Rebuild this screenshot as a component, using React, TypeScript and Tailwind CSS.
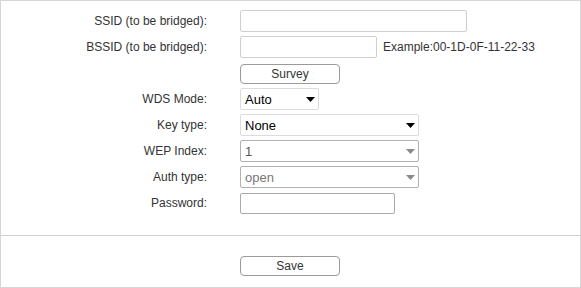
import React from "react";

const font = { fontFamily: '"Liberation Sans", Arial, sans-serif' };

function Arrow({ color }: { color: string }) {
  return (
    <svg width="9" height="5" viewBox="0 0 9 5" className="shrink-0">
      <path d="M0 0 L9 0 L4.5 5 Z" fill={color} />
    </svg>
  );
}

function Select({
  value,
  width,
  disabled,
  textColor,
}: {
  value: string;
  width: string;
  disabled?: boolean;
  textColor?: string;
}) {
  return (
    <div
      className={`flex h-[22px] items-center justify-between rounded-[2px] border bg-white pl-[4px] pr-[3px] text-[13px] ${width} ${
        disabled ? "border-[#b0b0b0]" : "border-[#dcdcdc]"
      }`}
      style={{ color: textColor ?? "#000" }}
    >
      <span className="leading-none">{value}</span>
      <Arrow color={disabled ? "#8a8a8a" : "#000"} />
    </div>
  );
}

function Row({ label, children }: { label: string; children?: React.ReactNode }) {
  return (
    <div className="flex h-[22px] items-center">
      <div className="w-[207px] pr-[1px] text-right text-[12px] text-[#333]">{label}</div>
      <div className="ml-[32px] flex items-center">{children}</div>
    </div>
  );
}

export default function App() {
  return (
    <div style={font} className="h-[288px] w-[581px] bg-white">
      <div className="flex h-[288px] w-[581px] flex-col border border-[#d6d6d6]">
        <div className="flex flex-col gap-[4px] border-b border-[#cfcfcf] pb-[21px] pt-[9px]">
          <Row label="SSID (to be bridged):">
            <div className="h-[22px] w-[227px] rounded-[2px] border border-[#cfcfcf] bg-white" />
          </Row>
          <Row label="BSSID (to be bridged):">
            <div className="h-[22px] w-[137px] rounded-[2px] border border-[#cfcfcf] bg-white" />
            <span className="ml-[6px] text-[12px] text-[#333]">Example:00-1D-0F-11-22-33</span>
          </Row>
          <Row label="">
            <div className="mt-[1px] flex h-[20px] w-[100px] items-center justify-center rounded-[4px] border border-[#9a9a9a] bg-white text-[12px] text-[#333]">
              Survey
            </div>
          </Row>
          <Row label="WDS Mode:">
            <Select value="Auto" width="w-[79px]" />
          </Row>
          <Row label="Key type:">
            <Select value="None" width="w-[179px]" />
          </Row>
          <Row label="WEP Index:">
            <Select value="1" width="w-[179px]" disabled textColor="#555" />
          </Row>
          <Row label="Auth type:">
            <Select value="open" width="w-[179px]" disabled textColor="#777" />
          </Row>
          <Row label="Password:">
            <div className="h-[21px] w-[155px] rounded-[2px] border border-[#ababab] bg-white" />
          </Row>
        </div>
        <div className="pl-[239px] pt-[20px]">
          <div className="flex h-[20px] w-[100px] items-center justify-center rounded-[4px] border border-[#9a9a9a] bg-white text-[12px] text-[#333]">
            Save
          </div>
        </div>
      </div>
    </div>
  );
}
